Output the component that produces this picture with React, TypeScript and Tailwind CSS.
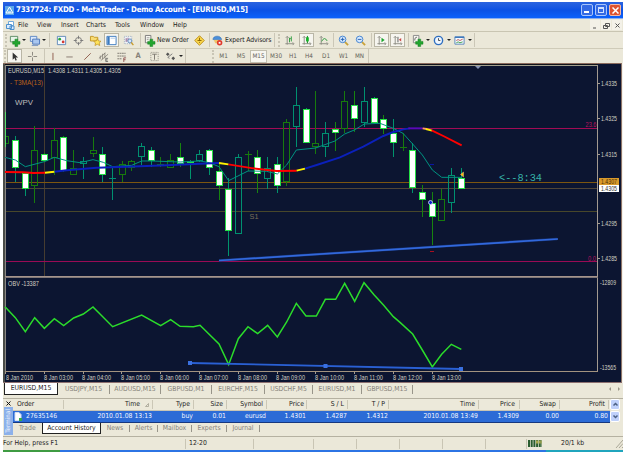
import type { ReactNode } from "react";

type Candle = [number, number, number, number, number, "w" | "g" | "t"];

/* x, high, body top, body bottom, low in third-pixel units; y starts at 60px */
const candles: Candle[] = [
  [46, 228, 240, 325, 367, "w"],
  [76, 335, 338, 387, 407, "w"],
  [104, 198, 270, 377, 430, "g"],
  [133, 278, 283, 302, 307, "w"],
  [163, 205, 240, 293, 345, "g"],
  [191, 228, 230, 332, 335, "w"],
  [221, 270, 325, 345, 345, "g"],
  [250, 290, 303, 313, 357, "t"],
  [279, 230, 271, 283, 290, "g"],
  [308, 262, 283, 345, 367, "w"],
  [338, 320, 355, 355, 420, "t"],
  [367, 303, 313, 345, 367, "g"],
  [395, 300, 302, 325, 333, "g"],
  [425, 250, 259, 292, 315, "t"],
  [454, 262, 271, 303, 322, "w"],
  [482, 290, 313, 313, 322, "g"],
  [512, 282, 301, 325, 325, "g"],
  [541, 248, 291, 312, 322, "w"],
  [570, 300, 302, 309, 357, "w"],
  [599, 270, 283, 302, 305, "t"],
  [628, 268, 271, 325, 345, "w"],
  [657, 310, 334, 377, 420, "w"],
  [686, 355, 387, 514, 587, "w"],
  [716, 282, 292, 523, 523, "t"],
  [744, 272, 283, 283, 333, "g"],
  [773, 270, 291, 343, 398, "w"],
  [802, 291, 325, 356, 387, "t"],
  [832, 291, 313, 377, 398, "w"],
  [860, 178, 187, 367, 377, "g"],
  [889, 82, 136, 200, 260, "t"],
  [918, 145, 147, 250, 250, "w"],
  [947, 93, 250, 262, 281, "g"],
  [976, 187, 220, 260, 292, "t"],
  [1005, 187, 208, 219, 272, "w"],
  [1034, 93, 124, 208, 220, "g"],
  [1063, 93, 136, 177, 217, "w"],
  [1093, 82, 124, 188, 200, "t"],
  [1122, 112, 115, 188, 190, "w"],
  [1151, 166, 178, 208, 223, "w"],
  [1180, 177, 219, 250, 292, "w"],
  [1209, 220, 260, 260, 272, "g"],
  [1238, 250, 271, 385, 398, "w"],
  [1267, 376, 397, 419, 470, "w"],
  [1297, 397, 428, 470, 554, "w"],
  [1325, 387, 418, 482, 482, "g"],
  [1354, 325, 345, 428, 460, "t"],
  [1384, 323, 355, 386, 387, "w"],
];

const strokes = { w: "#25e045", g: "#177a0d", t: "#009070" };

function CandleShape({ c }: { c: Candle }) {
  const [cx, h, t, b, l, k] = c;
  const x = Math.floor(cx / 3);
  const y = (v: number) => 60 + Math.round(v / 3);
  const wick = k === "w" ? (cx % 2 ? "#17840f" : "#00946c") : strokes[k];
  if (t === b)
    return (
      <g fill={wick}>
        <rect x={x} y={y(h)} width={1} height={y(l) - y(h)} />
        <rect x={x - 3} y={y(t)} width={7} height={1} />
      </g>
    );
  return (
    <g>
      <rect x={x} y={y(h)} width={1} height={y(t) - y(h)} fill={wick} />
      <rect x={x} y={y(b)} width={1} height={y(l) - y(b)} fill={wick} />
      <rect x={x - 2.5} y={y(t) + 0.5} width={6} height={Math.max(1, y(b) - y(t) - 1)} fill={k === "w" ? "#fff" : "none"} stroke={strokes[k]} />
    </g>
  );
}

function Label({ x, y, w, s = 7, c = "#d2cfc2", f = "Liberation Sans", children }: { x: number; y: number; w: number; s?: number; c?: string; f?: string; children: string }) {
  return (
    <text x={x} y={y} fontSize={s} fill={c} fontFamily={`"${f}", sans-serif`} textLength={w} lengthAdjust="spacingAndGlyphs">
      {children}
    </text>
  );
}

const times = ["2010", "03:00", "04:00", "05:00", "06:00", "07:00", "08:00", "09:00", "10:00", "11:00", "12:00", "13:00"];
const prices: [string, number][] = [["1.4335", 83.5], ["1.4325", 118.5], ["1.4315", 154], ["1.4295", 223.5], ["1.4285", 258.5]];

function Chart() {
  return (
    <svg className="block h-[320px] w-[620px]" viewBox="3 63 620 320">
      <rect x="3" y="63" width="620" height="320" fill="#0c1531" />
      <g shapeRendering="crispEdges">
        <rect x="3" y="63" width="619" height="1" fill="#8a6a5c" />
        <rect x="3" y="64" width="594" height="1" fill="#11131a" />
        <rect x="3" y="64" width="2" height="319" fill="#4a4c48" />
        <rect x="5" y="65" width="593" height="1" fill="#a3a08e" />
        <rect x="5" y="65" width="1" height="307" fill="#8a8784" />
        <rect x="597" y="65" width="1" height="307" fill="#a39a90" />
        <rect x="5" y="276" width="593" height="1" fill="#a6948c" />
        <rect x="5" y="277" width="593" height="1" fill="#807878" />
        <rect x="5" y="371" width="593" height="1" fill="#a3937f" />
        <rect x="621" y="63" width="1" height="320" fill="#8d7468" />
        <rect x="622" y="63" width="1" height="320" fill="#f4f2ea" />
        <rect x="3" y="382" width="619" height="1" fill="#8d7070" />
        <rect x="44" y="66" width="1" height="210" fill="#463c30" />
        <rect x="6" y="128" width="591" height="1" fill="#a30b55" />
        <rect x="6" y="182" width="591" height="1" fill="#7d5610" />
        <rect x="6" y="188" width="591" height="1" fill="#514636" />
        <rect x="6" y="211" width="591" height="1" fill="#48472a" />
        <rect x="6" y="261" width="591" height="1" fill="#9a0b55" />
        <rect x="5" y="112" width="1" height="35" fill="#5bdc6d" />
        <path d="M6 136.500h2.500v7H6" fill="none" stroke="#177a0d" />
        {candles.map((c) => (
          <CandleShape key={c[0]} c={c} />
        ))}
        {prices.map(([p, y]) => (
          <rect key={p} x="598" y={y - 0.5} width="2" height="1" fill="#a39a90" />
        ))}
        {times.map((t, i) => (
          <rect key={t} x={Math.round(5 + i * 38.8)} y="372" width="1" height="2" fill="#a39a90" />
        ))}
      </g>
      <g transform="translate(0 60) scale(.33333)" fill="none">
        <polyline points="15,292 46,300 76,320 133,305 163,292 200,302 240,308 279,299 310,307 338,320 395,316 425,303 454,303 540,306 600,303 628,308 657,320 686,362 744,333 800,334 832,342 860,315 889,270 947,264 1005,243 1034,222 1063,210 1093,192 1140,190 1180,205 1209,220 1238,252 1267,285 1297,330 1325,352 1384,352" stroke="#009482" strokeWidth="3" />
        <g strokeWidth="5.8">
          <polyline points="163,335 200,331 290,323 380,320 500,316 600,311 657,309" stroke="#0b20bb" />
          <polyline points="15,336 70,337 100,339 135,338" stroke="#f00" />
          <polyline points="135,338 163,335" stroke="#fff200" />
          <polyline points="685,313 760,325 830,333 890,332" stroke="#f00" />
          <polyline points="657,309 685,313" stroke="#fff200" />
          <polyline points="890,332 915,326" stroke="#fff200" />
          <polyline points="915,326 950,315 1020,292 1090,260 1150,228 1180,216 1210,208 1230,205" stroke="#0b20bb" />
          <polyline points="1225,205 1268,205" stroke="#5a08b8" />
          <polyline points="1268,205 1280,207" stroke="#ff9a66" />
          <polyline points="1278,207 1296,212" stroke="#fff200" />
          <polyline points="1295,211 1330,228 1385,256" stroke="#f00" />
        </g>
      </g>
      <line x1="219" y1="260.5" x2="557" y2="239" stroke="#16306f" strokeWidth="2.6" />
      <line x1="219" y1="260.5" x2="558" y2="239" stroke="#3268dc" strokeWidth="1.7" />
      <path d="M475 66h6l-3 3z" fill="#8694b4" />
      <rect x="430" y="164" width="4" height="1" fill="#0a15a5" />
      <rect x="430" y="251" width="4" height="1" fill="#a80e20" />
      <circle cx="430.5" cy="202.5" r="2" fill="#0b1fc8" stroke="#d8e0ff" strokeWidth=".8" />
      <path d="M460.5 174.500l3-2.500v5z" fill="#ffb800" stroke="#f7e4a8" strokeWidth=".4" />
      <Label x={8} y={73} w={36}>EURUSD,M15</Label>
      <Label x={48} y={73} w={73}>1.4308 1.4311 1.4305 1.4305</Label>
      <Label x={10} y={84.500} w={33} c="#b8601a">- T3MA(13)</Label>
      <Label x={15} y={105} w={18} s={8} c="#bcbcbc">WPV</Label>
      <Label x={249.500} y={218.500} w={9} s={7.500} c="#7a705a">S1</Label>
      <Label x={499} y={181} w={43} s={10.500} c="#36b3a7" f="Liberation Mono">{"<--8:34"}</Label>
      <Label x={585.500} y={127} w={11} s={6.500} c="#b8125f">23.6</Label>
      <Label x={588} y={260.500} w={8} s={6.500} c="#b8125f">0.0</Label>
      {prices.map(([p, y]) => (
        <Label key={p} x={601} y={y + 2.500} w={16}>{p}</Label>
      ))}
      <rect x="599" y="178" width="20" height="7" fill="#d99a2c" />
      <Label x={601} y={184} w={16} c="#4a3008">1.4307</Label>
      <rect x="599" y="185" width="20" height="7" fill="#fff" />
      <Label x={601} y={191} w={16} c="#333">1.4305</Label>
      <Label x={8} y={286} w={31}>OBV -13387</Label>
      <Label x={600} y={284.500} w={16}>-12809</Label>
      <Label x={600} y={370} w={16}>-13565</Label>
      <g transform="translate(0 270) scale(.33333)">
        <polyline fill="none" stroke="#2bdc2b" strokeWidth="4.500" points="15,110 46,143 76,185 104,143 133,175 163,146 191,167 221,144 250,132 279,111 338,170 425,135 482,167 512,149 540,169 580,170 600,166 657,222 686,284 715,206 744,170 773,191 803,166 832,201 860,156 889,100 918,138 949,138 976,88 1007,88 1034,40 1064,94 1092,38 1122,74 1151,106 1180,140 1200,157 1238,192 1267,240 1297,291 1325,253 1354,223 1384,238" />
      </g>
      <line x1="190" y1="363" x2="461" y2="369" stroke="#2a60d4" strokeWidth="1.800" />
      {[[190, 363], [325.5, 366], [461, 369]].map(([x, y]) => (
        <rect key={x} x={x - 2} y={y - 2} width="4" height="4" fill="#3a70e0" />
      ))}
      {times.map((t, i) => (
        <Label key={t} x={Math.round((i ? 4.800 : 5.500) + i * 38.8)} y={379.500} w={i ? 29 : 27} s={6.500}>{`8 Jan ${t}`}</Label>
      ))}
    </svg>
  );
}

function Icon({ w, on, children }: { w: string; on?: boolean; children: ReactNode }) {
  return (
    <div className={`flex h-[15px] shrink-0 items-center justify-center ${w}`}>
      <div className={`flex h-[14px] items-center justify-center ${on ? "w-[15px] border border-[#b9b6a6] bg-[#f6f5ef]" : "w-[14px]"}`}>
        <svg className="h-[11px] w-[11px] shrink-0 overflow-visible" viewBox="0 0 12 12" fill="none">
          {children}
        </svg>
      </div>
    </div>
  );
}
function Caret({ w }: { w: string }) {
  return (
    <div className={`flex shrink-0 items-center justify-center ${w}`}>
      <div className="border-x-[2px] border-t-[2px] border-x-transparent border-t-[#222]" />
    </div>
  );
}
function Sep({ w }: { w: string }) {
  return (
    <div className={`flex shrink-0 justify-center ${w}`}>
      <div className="h-[14px] border-l border-[#cbc7b7]" />
    </div>
  );
}
function Grip({ w }: { w: string }) {
  return (
    <div className={`flex shrink-0 justify-center ${w}`}>
      <div className="h-[13px] border-l-2 border-dotted border-[#c9c5b5]" />
    </div>
  );
}

const plus = <path d="M6.500 4.500h3v2.500H12v3H9.500v2.500h-3V10H4V7h2.500z" fill="#22a52e" stroke="#0f7a1c" strokeWidth=".5" />;
const axes = <path d="M3.500 1.500v9M1.500 9.500h9M2 3l1.500-1.500L5 3M9.500 8l1.300 1.500L9.500 11" stroke="#8b8b82" strokeWidth="1" />;

function Toolbar1() {
  return (
    <div className="flex h-[17px] items-center border-t border-[#c9c5b2] text-[#222]">
      <Grip w="w-[5px]" />
      <Icon w="w-[12px]"><path d="M1.500 1.500h8v6h-8z" fill="#e8f4e8" stroke="#5c8a62" />{plus}</Icon>
      <Caret w="w-[7px]" />
      <Icon w="w-[14px]"><path d="M1.500 1.500h7v5.500h-7z" fill="#dbe8fb" stroke="#5b85c4" /><path d="M4 4.500h7.500V10H4z" fill="#a9c7f0" stroke="#4b75b8" /><path d="M3 11.500h7" stroke="#7a96bf" /></Icon>
      <Caret w="w-[5px]" />
      <Sep w="w-[7px]" />
      <Icon w="w-[16px]"><path d="M1.500 1.500h9v9h-9z" fill="#f4f9ff" stroke="#5d88b8" /><circle cx="4" cy="4.500" r="1.500" fill="#28a53a" /><circle cx="7.800" cy="7.500" r="1.500" fill="#d43a32" /></Icon>
      <Icon w="w-[18px]"><circle cx="6" cy="6" r="3.300" stroke="#777" /><path d="M6 .8v3.400M6 7.800v3.400M.8 6h3.400M7.800 6h3.400" stroke="#777" /></Icon>
      <Icon w="w-[16px]"><path d="M.5 1.500h3l1 1h4v4h-8z" fill="#f8dc74" stroke="#c49722" /><path d="m8 4 1.200 2.500 2.800.3-2 1.900.6 2.800L8 10.100l-2.600 1.400.6-2.800-2-1.900 2.800-.3z" fill="#ffe45c" stroke="#b88a16" strokeWidth=".7" /></Icon>
      <Icon w="w-[16px]" on><path d="M1 1.500h10v9H1z" fill="#fff" stroke="#3979c0" /><path d="M1.500 2H4v8H1.500z" fill="#3979c0" /><path d="M5 3.500h5" stroke="#aac5e5" /></Icon>
      <Icon w="w-[18px]"><path d="M1.500 1.500h8v8h-8z" fill="#eef2f6" stroke="#9caabc" strokeDasharray="1 1" /><path d="M3.500 3.500v4M5.500 3v4" stroke="#858" /><circle cx="7.500" cy="6.500" r="2.200" fill="#d6e7fb" stroke="#5d88b8" /><path d="m9 8 2.300 3" stroke="#c99b28" strokeWidth="1.500" /></Icon>
      <Sep w="w-[6px]" />
      <Icon w="w-[13px]"><path d="M1.500.5h6v8h-6z" fill="#f7f7f0" stroke="#777" /><path d="M3 3h3M3 5h2" stroke="#999" />{plus}</Icon>
      <span className="w-[35px] shrink-0 whitespace-nowrap pl-[1px] text-[6.800px] tracking-[-0.1px]">New Order</span>
      <Icon w="w-[17px]"><path d="m6 .8 5.200 5.200L6 11.200.8 6z" fill="#f9d64c" stroke="#b98a14" /><path d="M6 3v3.500M3.800 6h4.400M6 7.500v1" stroke="#8a6204" /></Icon>
      <Sep w="w-[3px]" />
      <Icon w="w-[13px]"><path d="M1 5c0-5 9-5 9.500 0z" fill="#4a8fda" stroke="#2b68b0" strokeWidth=".6" /><path d="M2 5.500h7l-1 3.500H3.500z" fill="#efc66a" /><circle cx="8.300" cy="8.500" r="3" fill="#e0392c" /><path d="M7.300 7.500h2v2h-2z" fill="#fff" /></Icon>
      <span className="w-[48px] shrink-0 whitespace-nowrap pl-[1px] text-[6.800px] tracking-[-0.1px]">Expert Advisors</span>
      <Sep w="w-[4px]" />
      <Grip w="w-[5px]" />
      <Icon w="w-[16px]">{axes}<path d="M6 3v5M8 1.500V7M6 4h1.500" stroke="#2a9a3a" /></Icon>
      <Icon w="w-[18px]" on>{axes}<path d="M7 1v8" stroke="#087d18" /><path d="M5.500 2.500h3v4.500h-3z" fill="#16b32a" /></Icon>
      <Icon w="w-[16px]">{axes}<path d="M4 7q3-6 6-.5" stroke="#2a9a3a" /></Icon>
      <Sep w="w-[4px]" />
      <Icon w="w-[16px]"><path d="m7.500 7.500 3.500 3.500" stroke="#c9a23a" strokeWidth="2" /><circle cx="5" cy="4.800" r="3.600" fill="#d4e8ff" stroke="#3f7fcc" /><path d="M3 4.800h4M5 2.800v4" stroke="#245fae" /></Icon>
      <Icon w="w-[18px]"><path d="m7.500 7.500 3.500 3.500" stroke="#c9a23a" strokeWidth="2" /><circle cx="5" cy="4.800" r="3.600" fill="#d4e8ff" stroke="#3f7fcc" /><path d="M3 4.800h4" stroke="#245fae" /></Icon>
      <Sep w="w-[4px]" />
      <Icon w="w-[16px]" on>{axes}<path d="m6 3 3.500 2.500L6 8z" fill="#18a52c" /></Icon>
      <Icon w="w-[17px]" on>{axes}<path d="M6.500 2v6" stroke="#555" /><path d="m7.500 5.200 2.500-2v4z" fill="#c44" /></Icon>
      <Sep w="w-[5px]" />
      <Icon w="w-[13px]"><path d="M1.500.5h6v8h-6z" fill="#f7f7f0" stroke="#888" /><path d="M3 6q0-4 2.500-3.500" stroke="#666" />{plus}</Icon>
      <Caret w="w-[7px]" />
      <Icon w="w-[15px]"><circle cx="6" cy="6" r="4.500" fill="#eef6ff" stroke="#2f6fc0" strokeWidth="1.500" /><path d="M6 3.500V6h2" stroke="#444" /></Icon>
      <Caret w="w-[6px]" />
      <Icon w="w-[15px]"><path d="M1 2h10v8H1z" fill="#f7fbff" stroke="#5583b8" /><path d="M1 2.500h10" stroke="#3f79bd" strokeWidth="1.500" /><path d="m2.500 6 2-1 2 1 3-1.500" stroke="#b65050" /><path d="m2.500 8.500 2-1 2 1 3-1" stroke="#3c9a4a" /></Icon>
      <Caret w="w-[5px]" />
      <Sep w="w-[5px]" />
    </div>
  );
}

function Toolbar2() {
  const frames = [["M1", "w-[17px]"], ["M5", "w-[18px]"], ["M15", "w-[17px]"], ["M30", "w-[18px]"], ["H1", "w-[16px]"], ["H4", "w-[16px]"], ["D1", "w-[18px]"], ["W1", "w-[17px]"], ["MN", "w-[15px]"]];
  return (
    <div className="flex h-[15px] items-center border-t border-[#cfcbb9]">
      <Grip w="w-[3px]" />
      <Icon w="w-[17px]" on><path d="M4 1.500v8l2-2 1.200 3 1.300-.6L7.300 7H10z" fill="#333" /></Icon>
      <Icon w="w-[19px]"><path d="M6 1v4M6 7v4M1 6h4M7 6h4" stroke="#84827a" /></Icon>
      <Sep w="w-[4px]" />
      <Icon w="w-[13px]"><path d="M6.500 2v8" stroke="#8d5a48" /></Icon>
      <Icon w="w-[20px]"><path d="M2.500 6.500h7" stroke="#85776c" /></Icon>
      <Icon w="w-[16px]"><path d="m2.500 9.500 7-7" stroke="#8d5a48" /></Icon>
      <Icon w="w-[17px]"><path d="m1 8 7-6M3 10.500l8-7M2.500 5v4M5 3v6M7.500 2v6" stroke="#78746c" strokeWidth=".8" /><path d="M11 8H8.500v3.500H11M8.500 9.800h2" stroke="#555" strokeWidth=".8" /></Icon>
      <Icon w="w-[18px]"><path d="M1.500 2.500h9M1.500 5.500h9M1.500 8.500h5" stroke="#77736b" strokeDasharray="2 .5" /><path d="M8.500 12V7.500H11M8.500 9.500h2" stroke="#844" strokeWidth=".9" /></Icon>
      <span className="w-[16px] shrink-0 text-center text-[7.500px] font-bold text-[#858278]">A</span>
      <Icon w="w-[17px]"><path d="M2 1.500h8v9H2z" stroke="#8c897f" strokeDasharray="1 1" /><path d="M3.500 3.500h5M6 3.500v6" stroke="#77736b" /></Icon>
      <Icon w="w-[15px]"><path d="m1 3.500 2-2 2 2-2 2zM7 8l2-2 2 2-2 2z" fill="#555" /><path d="m5 8-2-1 5-4" stroke="#777" /></Icon>
      <Caret w="w-[5px]" />
      <Sep w="w-[5px]" />
      <div className="w-[22px]" />
      <Grip w="w-[5px]" />
      {frames.map(([t, w]) => (
        <div key={t} className={`flex h-[13px] shrink-0 items-center justify-center text-[6.300px] text-[#625f58] ${w} ${t === "M15" ? "border border-[#c2bfaf] bg-[#f7f6f0]" : ""}`}>{t}</div>
      ))}
      <Sep w="w-[3px]" />
    </div>
  );
}

const menu = [["File", "w-[19px]"], ["View", "w-[24px]"], ["Insert", "w-[25px]"], ["Charts", "w-[29px]"], ["Tools", "w-[25px]"], ["Window", "w-[33px]"], ["Help", "w-[30px]"]];
const chartTabs = [["USDJPY,M15", "w-[52px]"], ["AUDUSD,M15", "w-[51px]"], ["GBPUSD,M1", "w-[51px]"], ["EURCHF,M15", "w-[53px]"], ["USDCHF,M5", "w-[48px]"], ["EURUSD,M1", "w-[49px]"], ["GBPUSD,M15", "w-[51px]"]];
const columns = [
  ["Time", "2010.01.08 13:13", "w-[89px]", "pr-[3px]"],
  ["Type", "buy", "w-[41px]", "pr-[3px]"],
  ["Size", "0.01", "w-[33px]", "pr-[3px]"],
  ["Symbol", "eurusd", "w-[40px]", "pr-[3px]"],
  ["Price", "1.4301", "w-[40px]", "pr-[2px]"],
  ["S / L", "1.4287", "w-[41px]", "pr-[3px]"],
  ["T / P", "1.4312", "w-[41px]", "pr-[3px]"],
  ["Time", "2010.01.08 13:49", "w-[90px]", "pr-[3px]"],
  ["Price", "1.4309", "w-[41px]", "pr-[4px]"],
  ["Swap", "0.00", "w-[40px]", "pr-[3px]"],
  ["Profit", "0.80", "w-[49px]", "pr-[3px]"],
];
const termTabs = [["News", "w-[29px]"], ["Alerts", "w-[28px]"], ["Mailbox", "w-[34px]"], ["Experts", "w-[35px]"], ["Journal", "w-[33px]"]];

export default function App() {
  return (
    <div className="h-[452px] w-[625px] overflow-hidden bg-white pl-[3px] pt-[2px] font-['DejaVu_Sans_Condensed','DejaVu_Sans',sans-serif] text-[6.800px] leading-none text-[#222]">
      <div className="flex w-[620px] flex-col bg-[#ebe8d9]">
        <div className="flex h-[17px] items-center border-b border-[#8aaef0] bg-linear-to-b from-[#2a63df] via-[#0b51e4] to-[#0b61fb] pl-[2px] pr-[2px]">
          <svg className="h-[9px] w-[9px]" viewBox="0 0 9 9"><rect width="9" height="9" fill="#5ca7e9" /><path d="m4.500 1 3.500 6H1z" fill="none" stroke="#fff" /><path d="M3 6h3" stroke="#fff" /></svg>
          <span className="ml-[2px] whitespace-nowrap text-[7.800px] font-bold tracking-[-0.24px] text-white">7337724: FXDD - MetaTrader - Demo Account - [EURUSD,M15]</span>
          <div className="ml-auto flex gap-[2px]">
            <div className="flex h-[12px] w-[12px] items-end rounded-[2px] border border-[#a9c5fb] bg-[#3469e4] p-[2px]"><div className="h-[2px] w-[5px] bg-white" /></div>
            <div className="h-[12px] w-[12px] rounded-[2px] border border-[#a9c5fb] bg-[#3469e4] p-[2px]"><div className="h-[6px] border border-t-2 border-[#cfe0ff]" /></div>
            <div className="flex h-[12px] w-[12px] items-center justify-center rounded-[2px] border border-[#f2b8a4] bg-[#dd5330]"><svg className="h-[7px] w-[7px]" viewBox="0 0 7 7"><path d="m.5.5 6 6m0-6-6 6" stroke="#fff" strokeWidth="1.500" /></svg></div>
          </div>
        </div>
        <div className="flex h-[12px] items-center">
          <div className="flex w-[15px] justify-center"><svg className="h-[9px] w-[9px]" viewBox="0 0 9 9"><path d="M2.500.5h5v4h-5z" fill="#fff" stroke="#6fa8da" /><path d="M.5 3.500h5v4h-5zM4 5h4v3.500H4z" fill="#dcecff" stroke="#4d90ce" /></svg></div>
          {menu.map(([t, w]) => <span key={t} className={`shrink-0 whitespace-nowrap ${w}`}>{t}</span>)}
          <div className="ml-auto flex gap-[1px] pr-[1px] text-[#444]">
            {["M1 6h3", "M2.500 1.500h4v3h-4zM.5 3.500h4v3h-4z", "m1.500 1.500 4 4m0-4-4 4"].map((d) => (
              <div key={d} className="flex h-[10px] w-[10px] items-center justify-center bg-[#f3f1e8]"><svg className="h-[7px] w-[7px]" viewBox="0 0 7 7"><path d={d} stroke="#555" fill="none" /></svg></div>
            ))}
          </div>
        </div>
        <Toolbar1 />
        <Toolbar2 />
        <Chart />
        <div className="flex h-[15px] items-start text-[6.800px] text-[#85827a]">
          <div className="ml-[1px] flex h-[12px] w-[54px] items-center justify-center border border-t-0 border-[#222] bg-white text-[#222]">EURUSD,M15</div>
          {chartTabs.map(([t, w]) => (
            <div key={t} className={`mt-[2px] flex h-[9px] shrink-0 items-center justify-center border-r border-[#98958a] ${w}`}>{t}</div>
          ))}
          <div className="ml-auto mt-[4px] flex gap-[7px] pr-[3px]">
            <div className="border-y-[2px] border-r-[2px] border-y-transparent border-r-[#999588]" />
            <div className="border-y-[2px] border-l-[2px] border-y-transparent border-l-[#999588]" />
          </div>
        </div>
        <div className="flex h-[39px] border-b border-t border-[#b5b1a1]">
          <div className="flex w-[10px] flex-col items-center bg-[#ebe8d9]">
            <div className="flex h-[8px] items-center"><svg className="h-[5px] w-[5px]" viewBox="0 0 5 5"><path d="m.5.5 4 4m0-4-4 4" stroke="#111" /></svg></div>
            <div className="flex h-[28px] w-[9px] items-center justify-center bg-[#8cb1ea]"><span className="rotate-180 text-[6.300px] text-[#f0f6ff] [writing-mode:vertical-rl]">Terminal</span></div>
          </div>
          <div className="flex w-[609px] flex-col">
            <div className="flex h-[24px]">
              <div className="w-[597px]">
                <div className="flex h-[12px] items-center border-b border-[#c9c5b4] bg-[#ece9da]">
                  <div className="h-[9px] w-[51px] border-r border-[#cbc7b6] pl-[4px] pt-[1px]">Order</div>
                  {columns.map(([t, , w, p], i) => (
                    <div key={i} className={`flex h-[9px] shrink-0 items-start justify-end whitespace-nowrap border-r border-[#cbc7b6] pt-[1px] ${w} ${p}`}>
                      {t}
                      {i === 0 && <svg className="ml-[5px] mt-[2px] h-[4px] w-[4px]" viewBox="0 0 4 4"><path d="m.5 3.500 3-3v3z" fill="none" stroke="#a5a192" strokeWidth=".8" /></svg>}
                    </div>
                  ))}
                </div>
                <div className="flex h-[12px] items-center border-b border-[#16377f] bg-[#2c6bd6] text-[#f0f5ff]">
                  <div className="flex w-[51px] items-center gap-[4px] pl-[1px]">
                    <svg className="h-[9px] w-[8px]" viewBox="0 0 8 9"><path d="M1 .5h4l2 2v6H1z" fill="#fff" stroke="#d5dff0" /><path d="M5 6h3v3H5z" fill="#35a84b" /></svg>
                    <span>27635146</span>
                  </div>
                  {columns.map(([, v, w], i) => (
                    <div key={i} className={`shrink-0 whitespace-nowrap pr-[1px] text-right ${w}`}>{v}</div>
                  ))}
                </div>
              </div>
              <div className="flex w-[10px] flex-col gap-[1px]">
                {["m1.500 4.500 2-2 2 2", "m1.500 2.500 2 2 2-2"].map((d) => (
                  <div key={d} className="flex h-[11px] items-center justify-center rounded-[2px] border border-white bg-[#c0d1fb]"><svg className="h-[7px] w-[7px]" viewBox="0 0 7 7"><path d={d} stroke="#4d6185" strokeWidth="1.500" fill="none" /></svg></div>
                ))}
              </div>
            </div>
            <div className="flex h-[11px] items-center text-[#85827a]">
              <div className="w-[29px] pl-[6px]">Trade</div>
              <div className="flex h-[11px] w-[59px] items-center justify-center whitespace-nowrap border border-t-0 border-[#222] bg-white text-[#222]">Account History</div>
              {termTabs.map(([t, w]) => <div key={t} className={`flex h-[7px] items-center justify-center border-r border-[#98958a] ${w}`}>{t}</div>)}
            </div>
          </div>
        </div>
        <div className="flex h-[13px] items-center whitespace-nowrap">
          <div className="w-[182px]">For Help, press F1</div>
          <div className="flex h-[10px] w-[68px] items-center border-l border-[#c9c5b4] pl-[3px]">12-20</div>
          <div className="h-[10px] w-[61px] border-x border-[#c9c5b4]" />
          <div className="h-[10px] w-[43px] border-r border-[#c9c5b4]" />
          <div className="h-[10px] w-[43px] border-r border-[#c9c5b4]" />
          <div className="h-[10px] w-[43px] border-r border-[#c9c5b4]" />
          <div className="h-[10px] w-[43px] border-r border-[#c9c5b4]" />
          <div className="h-[10px] w-[41px] border-r border-[#c9c5b4]" />
          <svg className="ml-[1px] h-[7px] w-[14px]" viewBox="0 0 14 7"><path d="M0 3.500h14" stroke="#2a5d30" strokeWidth="7" strokeDasharray="2 .7" /><path d="M8 2h6" stroke="#a8a84a" strokeWidth="3" strokeDasharray="2 .7" /></svg>
          <div className="w-[58px] pl-[19px]">20/1 kb</div>
          <svg className="ml-auto h-[9px] w-[8px]" viewBox="0 0 8 9"><path d="m1 9 7-8M4 9l4-4.500M7 9l1-1" stroke="#aaa797" /></svg>
        </div>
        <div className="flex h-[4px] bg-[#2c74e4]">
          <div className="w-[57px] bg-[#3f9b42]" />
          <div className="ml-auto w-[77px] bg-[#20a5bd]" />
        </div>
      </div>
    </div>
  );
}
